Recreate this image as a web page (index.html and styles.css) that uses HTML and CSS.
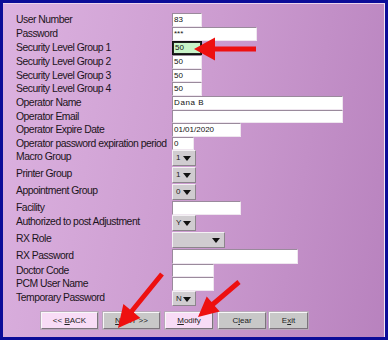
FILE: index.html
```html
<!DOCTYPE html>
<html lang="en">
  <head>
    <meta charset="UTF-8" />
    <meta name="viewport" content="width=device-width, initial-scale=1.0" />
    <title>Operator Setup</title>
    <link rel="stylesheet" href="styles.css">
  </head>
  <body>
    <!-- Operator form window -->
    <div class="frame">
      <div class="form">
        <div class="row h14"><div class="label">User Number</div><div class="field w30">83</div></div>
        <div class="row h14"><div class="label">Password</div><div class="field w85">***</div></div>
        <div class="row h14"><div class="label">Security Level Group 1</div><div class="field w30 focus">50</div></div>
        <div class="row h14"><div class="label">Security Level Group 2</div><div class="field w30">50</div></div>
        <div class="row h13"><div class="label">Security Level Group 3</div><div class="field w30">50</div></div>
        <div class="row h14"><div class="label">Security Level Group 4</div><div class="field w30">50</div></div>
        <div class="row h14"><div class="label">Operator Name</div><div class="field w171 spaced">Dana B</div></div>
        <div class="row h13"><div class="label">Operator Email</div><div class="field w171"></div></div>
        <div class="row h14"><div class="label">Operator Expire Date</div><div class="field w69">01/01/2020</div></div>
        <div class="row h13"><div class="label">Operator password expiration period</div><div class="field w22">0</div></div>
        <div class="row h17"><div class="label">Macro Group</div><div class="select">1<span class="caret"></span></div></div>
        <div class="row h17"><div class="label">Printer Group</div><div class="select">1<span class="caret"></span></div></div>
        <div class="row h17"><div class="label">Appointment Group</div><div class="select">0<span class="caret"></span></div></div>
        <div class="row h14"><div class="label">Facility</div><div class="field w69"></div></div>
        <div class="row h17"><div class="label">Authorized to post Adjustment</div><div class="select">Y<span class="caret"></span></div></div>
        <div class="row h17"><div class="label">RX Role</div><div class="select wide"><span class="caret"></span></div></div>
        <div class="row h15"><div class="label">RX Password</div><div class="field w126"></div></div>
        <div class="row h13"><div class="label">Doctor Code</div><div class="field w42"></div></div>
        <div class="row h14"><div class="label">PCM User Name</div><div class="field w42"></div></div>
        <div class="row h15"><div class="label">Temporary Password</div><div class="select">N<span class="caret"></span></div></div>

        <!-- Buttons -->
        <div class="buttons">
          <div class="btn pink b57">&lt;&lt; <u>B</u>ACK</div>
          <div class="btn b57"><u>N</u>EXT &gt;&gt;</div>
          <div class="btn pink b48"><u>M</u>odify</div>
          <div class="btn b48">C<u>l</u>ear</div>
          <div class="btn b39 last">E<u>x</u>it</div>
        </div>
      </div>

      <!-- Red arrows drawn over the form -->
      <svg class="arrows" width="388" height="340" viewBox="0 0 388 340">
        <polygon points="256,46.5 215,46.5 215,37.5 194,49 215,60.5 215,51.5 256,51.5" />
        <polygon points="163.9,275.6 133.8,312.5 140.4,317.9 118,328 123.4,304 130,309.4 160.1,272.4" />
        <polygon points="240.6,283.9 214.8,305.9 219.7,311.6 198,317 206.7,296.4 211.6,302.1 237.4,280.1" />
      </svg>
    </div>
  </body>
</html>
```

FILE: styles.css
```css
/* Window */
body {
  margin: 0;
  padding: 0;
  font-family: "Liberation Sans", Arial, sans-serif;
}

.frame {
  position: relative;
  width: 388px;
  height: 340px;
  box-sizing: border-box;
  border: 3px solid #0c0c98;
  background: linear-gradient(100deg, #dcb2e0 0%, #cc9cd0 50%, #b882be 100%);
  box-shadow: inset 0 1px 0 #ecd4ee, inset -1px 0 0 #f2e6f2;
  overflow: hidden;
}

.form {
  padding: 10px 0 0 13px;
}

/* Rows */
.row {
  display: flex;
  align-items: flex-start;
}

.h13 { height: 13px; }
.h14 { height: 14px; }
.h15 { height: 15px; }
.h17 { height: 17px; }

.label {
  width: 156px;
  flex: none;
  font-size: 10.4px;
  letter-spacing: -0.5px;
  line-height: 13px;
  color: #1c1420;
  white-space: nowrap;
}

/* Text fields */
.field {
  box-sizing: border-box;
  height: 13px;
  background: #fff;
  border: 1px solid;
  border-color: #9a8a9c #efe6ef #efe6ef #9a8a9c;
  font-size: 8px;
  line-height: 11px;
  padding-left: 1px;
  color: #111;
}

.h14 .field { height: 14px; line-height: 12px; }
.h15 .field { height: 15px; line-height: 13px; }

.field.spaced { letter-spacing: 0.6px; }

.field.focus {
  background: #c8f4c8;
  border: 1px solid #111;
  box-shadow: inset 0 0 0 1px #222;
  padding-left: 2px;
}

.w22 { width: 22px; }
.w30 { width: 30px; }
.w42 { width: 42px; }
.w69 { width: 69px; }
.w85 { width: 85px; }
.w126 { width: 126px; }
.w171 { width: 171px; }

/* Drop downs */
.select {
  position: relative;
  box-sizing: border-box;
  width: 24px;
  height: 16px;
  background: #d0ccd0;
  border: 1px solid;
  border-color: #f4f0f4 #8c848c #8c848c #f4f0f4;
  font-size: 8px;
  line-height: 14px;
  padding-left: 3px;
  color: #222;
}

.h15 .select { height: 15px; line-height: 13px; }

.select.wide { width: 53px; }

.caret {
  position: absolute;
  right: 4px;
  top: 5px;
  width: 0;
  height: 0;
  border-left: 4px solid transparent;
  border-right: 4px solid transparent;
  border-top: 5px solid #111;
}

/* Buttons */
.buttons {
  display: flex;
  gap: 5px;
  margin: 6px 0 0 25px;
}

.btn {
  box-sizing: border-box;
  height: 17px;
  background: #c8c8c8;
  border: 1px solid;
  border-color: #f8f8f8 #7c747c #7c747c #f8f8f8;
  box-shadow: 0 0 0 1px #b8a8ba;
  font-size: 8px;
  line-height: 15px;
  text-align: center;
  color: #222;
}

.btn.pink { background: #f8dcf6; }
.btn.last { margin-left: -2px; }

.b39 { width: 39px; }
.b48 { width: 48px; }
.b57 { width: 57px; }

.arrows {
  position: absolute;
  left: -3px;
  top: -3px;
  fill: #ee1010;
  pointer-events: none;
}
```
